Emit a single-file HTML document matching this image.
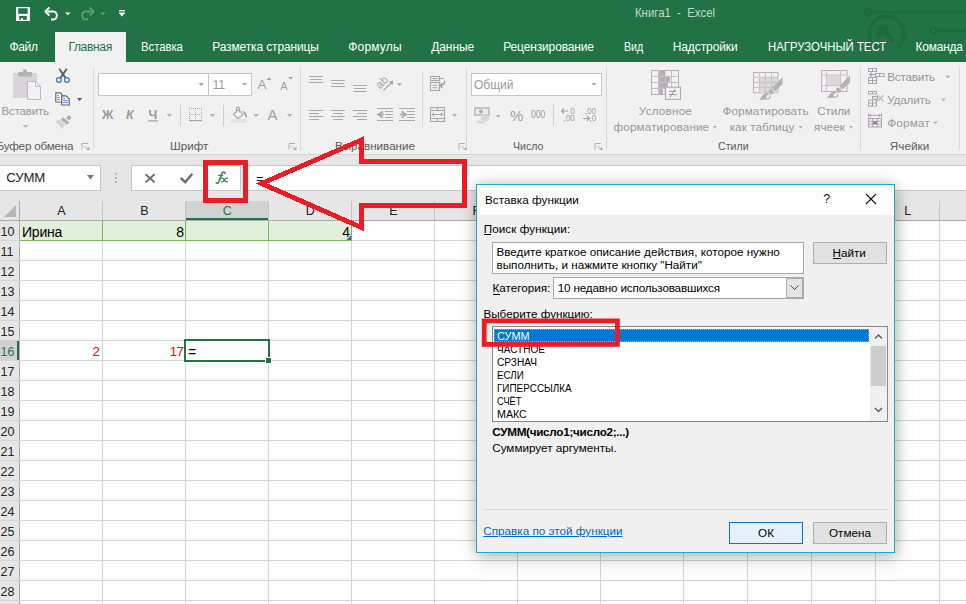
<!DOCTYPE html><html><head><meta charset="utf-8"><style>
*{margin:0;padding:0;box-sizing:border-box}
html,body{width:966px;height:604px;overflow:hidden;background:#fff;font-family:"Liberation Sans",sans-serif;font-size:12px;color:#000;position:relative}
.a{position:absolute}
.t{position:absolute;white-space:pre;line-height:14px}
.tab{position:absolute;top:40px;color:#fff;font-size:11.8px;white-space:nowrap;line-height:14px}
.gl{position:absolute;color:#505050;font-size:11.7px;white-space:nowrap;line-height:14px}
.dis{color:#a3a3a3}
.cell{position:absolute;font-size:14px;line-height:14px;white-space:nowrap}
.dt{position:absolute;font-size:11.7px;line-height:13px;white-space:pre;color:#000}
svg{position:absolute;overflow:visible}
</style></head><body>
<div class="a" style="left:0;top:0;width:966px;height:62px;background:#217346"></div>
<div class="t" style="left:635.3px;top:5.5px;font-size:12px;color:#c3dccb;transform:scaleX(0.947);transform-origin:0 0;">Книга1  -  Excel</div>
<svg style="left:0;top:0" width="966" height="62">
<g stroke="#1d6a3f" stroke-width="3" fill="none">
<circle cx="868" cy="12" r="3.2"/><line x1="871" y1="12" x2="966" y2="12"/>
<circle cx="933.5" cy="30.5" r="3.2"/><line x1="937" y1="30.5" x2="966" y2="30.5"/>
<path d="M 876 48 A 17.5 17.5 0 1 1 897 48" stroke-width="4"/>
<path d="M 894 42 L 880 28 M 879 37 L 879 28 L 888 28" stroke-width="4.5"/>
</g></svg>
<svg style="left:0;top:0" width="140" height="32">
<rect x="16" y="7" width="14" height="14" fill="#fff"/>
<rect x="18.2" y="8.2" width="9.5" height="5.6" fill="#217346"/>
<rect x="19.2" y="16" width="7.6" height="3.8" fill="#217346"/>
<rect x="21" y="18" width="2" height="2" fill="#fff"/>
<path d="M46 11.5 H54 A4.2 4.2 0 0 1 54 19.5 H51" fill="none" stroke="#fff" stroke-width="1.8"/>
<path d="M45 11.5 L49.5 7.5 M45 11.5 L49.5 15.5" fill="none" stroke="#fff" stroke-width="1.8"/>
<path d="M65 12.5 H70.5 L67.75 15.2 Z" fill="#fff"/>
<g stroke="#5e9c7a" fill="none" stroke-width="1.8">
<path d="M93 11.5 H85 A4.2 4.2 0 0 0 85 19.5 H88"/>
<path d="M94 11.5 L89.5 7.5 M94 11.5 L89.5 15.5"/>
</g>
<path d="M100 12.5 H105.5 L102.75 15.2 Z" fill="#5e9c7a"/>
<rect x="119" y="10" width="6" height="1.3" fill="#fff"/>
<path d="M118.5 12.5 H125.5 L122 16.5 Z" fill="#fff"/>
</svg>
<div class="a" style="left:55px;top:32px;width:71px;height:31px;background:#f1f1f1"></div>
<div class="t" style="left:9.4px;top:39.9px;font-size:12px;color:#fff;letter-spacing:-0.30px;">Файл</div>
<div class="t" style="left:68.4px;top:39.9px;font-size:12px;color:#217346;letter-spacing:-0.32px;">Главная</div>
<div class="t" style="left:141.1px;top:39.9px;font-size:12px;color:#fff;transform:scaleX(0.939);transform-origin:0 0;">Вставка</div>
<div class="t" style="left:212.2px;top:39.9px;font-size:12px;color:#fff;letter-spacing:-0.13px;">Разметка страницы</div>
<div class="t" style="left:348.3px;top:39.9px;font-size:12px;color:#fff;letter-spacing:0.17px;">Формулы</div>
<div class="t" style="left:431.2px;top:39.9px;font-size:12px;color:#fff;letter-spacing:-0.06px;">Данные</div>
<div class="t" style="left:503.2px;top:39.9px;font-size:12px;color:#fff;letter-spacing:-0.14px;">Рецензирование</div>
<div class="t" style="left:623.7px;top:39.9px;font-size:12px;color:#fff;transform:scaleX(0.884);transform-origin:0 0;">Вид</div>
<div class="t" style="left:672.7px;top:39.9px;font-size:12px;color:#fff;letter-spacing:-0.09px;">Надстройки</div>
<div class="t" style="left:767.7px;top:39.9px;font-size:12px;color:#fff;transform:scaleX(0.949);transform-origin:0 0;">НАГРУЗОЧНЫЙ ТЕСТ</div>
<div class="t" style="left:915.6px;top:39.9px;font-size:12px;color:#fff;letter-spacing:-0.24px;">Команда</div>
<div class="a" style="left:0;top:62px;width:966px;height:92px;background:#f1f1f1"></div>
<div class="a" style="left:0;top:154px;width:966px;height:1px;background:#d4d4d4"></div>
<div class="a" style="left:93px;top:67px;width:1px;height:83px;background:#d9d9d9"></div>
<div class="a" style="left:300px;top:67px;width:1px;height:83px;background:#d9d9d9"></div>
<div class="a" style="left:466px;top:67px;width:1px;height:83px;background:#d9d9d9"></div>
<div class="a" style="left:606px;top:67px;width:1px;height:83px;background:#d9d9d9"></div>
<div class="a" style="left:860px;top:67px;width:1px;height:83px;background:#d9d9d9"></div>
<div class="a" style="left:959px;top:67px;width:1px;height:83px;background:#d9d9d9"></div>
<div class="t" style="left:1.6px;top:104.0px;font-size:11.5px;color:#989898;letter-spacing:-0.19px;">Вставить</div>
<div class="t" style="left:-3.5px;top:139.0px;font-size:11.7px;color:#5b5b5b;letter-spacing:-0.21px;">Буфер обмена</div>
<div class="t" style="left:170.0px;top:139.4px;font-size:11.7px;color:#5b5b5b;">Шрифт</div>
<div class="t" style="left:335.0px;top:139.0px;font-size:11.7px;color:#5b5b5b;letter-spacing:-0.04px;">Выравнивание</div>
<div class="t" style="left:512.7px;top:138.8px;font-size:11.7px;color:#5b5b5b;transform:scaleX(0.903);transform-origin:0 0;">Число</div>
<div class="t" style="left:718.0px;top:138.8px;font-size:11.7px;color:#5b5b5b;transform:scaleX(0.908);transform-origin:0 0;">Стили</div>
<div class="t" style="left:889.8px;top:138.8px;font-size:11.7px;color:#5b5b5b;letter-spacing:0.06px;">Ячейки</div>
<div class="t" style="left:638.8px;top:104.0px;font-size:11.7px;color:#989898;letter-spacing:0.21px;">Условное</div>
<div class="t" style="left:613.6px;top:120.0px;font-size:11.7px;color:#989898;letter-spacing:0.13px;">форматирование</div>
<div class="t" style="left:722.5px;top:104.0px;font-size:11.7px;color:#989898;letter-spacing:0.10px;">Форматировать</div>
<div class="t" style="left:729.7px;top:120.0px;font-size:11.7px;color:#989898;letter-spacing:0.06px;">как таблицу</div>
<div class="t" style="left:817.2px;top:104.0px;font-size:11.7px;color:#989898;letter-spacing:-0.12px;">Стили</div>
<div class="t" style="left:814.0px;top:120.0px;font-size:11.7px;color:#989898;letter-spacing:0.07px;">ячеек</div>
<div class="t" style="left:887.2px;top:70.2px;font-size:11.7px;color:#989898;letter-spacing:-0.22px;">Вставить</div>
<div class="t" style="left:887.2px;top:93.0px;font-size:11.7px;color:#989898;letter-spacing:-0.17px;">Удалить</div>
<div class="t" style="left:887.2px;top:116.0px;font-size:11.7px;color:#989898;letter-spacing:0.21px;">Формат</div>
<div class="a" style="left:98px;top:73px;width:111px;height:23px;background:#fff;border:1px solid #c6c6c6"></div>
<div class="a" style="left:208px;top:73px;width:44px;height:23px;background:#fff;border:1px solid #c6c6c6"></div>
<div class="t" style="left:212.4px;top:77.5px;font-size:12.3px;color:#9a9a9a;">11</div>
<div class="a" style="left:471px;top:73px;width:131px;height:23px;background:#fff;border:1px solid #c6c6c6"></div>
<div class="t" style="left:474.0px;top:77.5px;font-size:12px;color:#9a9a9a;">Общий</div>
<div class="t" style="left:257.5px;top:78.0px;font-size:13.5px;color:#a0a0a0;">A</div>
<div class="t" style="left:280.5px;top:79.0px;font-size:10.5px;color:#a0a0a0;">A</div>
<div class="t" style="left:102.0px;top:107.5px;font-size:12.5px;color:#9a9a9a;letter-spacing:1.70px;font-weight:bold;">Ж</div>
<div class="t" style="left:126.0px;top:107.5px;font-size:12.5px;color:#9a9a9a;font-weight:bold;font-style:italic;">К</div>
<div class="t" style="left:148.5px;top:107.5px;font-size:12.5px;color:#9a9a9a;font-weight:bold;">Ч</div>
<div class="t" style="left:267.5px;top:107.5px;font-size:15px;color:#a0a0a0;">A</div>
<div class="t" style="left:510.0px;top:109.0px;font-size:15px;color:#a0a0a0;">%</div>
<div class="t" style="left:530.6px;top:108.3px;font-size:10px;color:#9a9a9a;transform:scaleX(0.863);transform-origin:0 0;">000</div>
<svg style="left:0;top:62px" width="966" height="92">
<g transform="translate(0,-62)">
<!-- paste clipboard -->
<rect x="13" y="73" width="24" height="25" rx="1" fill="#d8d5d8"/>
<rect x="18" y="72" width="14" height="4.5" fill="#b4b4b4"/>
<rect x="23" y="69.5" width="4" height="3" rx="1" fill="#b4b4b4"/>
<path d="M27.5 81.5 H35.5 L40.5 86.5 V99.5 H27.5 Z" fill="#f4f1f6" stroke="#bdbdbd" stroke-width="1"/>
<path d="M35.5 81.5 V86.5 H40.5" fill="none" stroke="#bdbdbd" stroke-width="1"/>
<path d="M22.5 125 H28.5 L25.5 128 Z" fill="#bcbcbc"/>
<!-- scissors -->
<path d="M59.2 68.8 L65.6 78 M66.8 68.8 L60.4 78" stroke="#5c5c5c" stroke-width="1.9" fill="none"/>
<circle cx="58.9" cy="80" r="2.4" fill="none" stroke="#3a78c0" stroke-width="1.2"/>
<circle cx="66.9" cy="80" r="2.4" fill="none" stroke="#3a78c0" stroke-width="1.2"/>
<!-- copy -->
<path d="M55.8 92.8 H60.5 L62 94.3 V102 H55.8 Z" fill="#fff" stroke="#666" stroke-width="1.2"/>
<path d="M61.8 95.8 H66 L69.2 99 V105 H61.8 Z" fill="#fff" stroke="#666" stroke-width="1.2"/>
<path d="M57.2 95.4 H58.8 M57.2 97.4 H59.8 M57.2 99.4 H59.8 M63.2 98.4 H65 M63.2 100.4 H67.8 M63.2 102.4 H67.8" stroke="#3a72b8" stroke-width="0.9"/>
<path d="M77 98 H82.2 L79.6 101 Z" fill="#555"/>
<!-- format painter -->
<path d="M55.5 121.3 L60.3 119.3 L65.8 124.6 L62 128.8 Z" fill="#d8d4d8"/>
<path d="M61 119.6 L63 117.3 L69.3 122.4 L67.2 124.7 Z" fill="#b0aeb0"/>
<path d="M66 118 L68.8 115 L71.6 117.8 L68.8 120.8 Z" fill="#b0aeb0"/>
<!-- launcher icons -->
<g fill="none" stroke="#b0b0b0" stroke-width="1">
<path d="M82 149.5 V143.5 H88"/><path d="M84.5 146 L88.5 150"/>
<path d="M289 149.5 V143.5 H295"/><path d="M291.5 146 L295.5 150"/>
<path d="M459 149.5 V143.5 H465"/><path d="M461.5 146 L465.5 150"/>
<path d="M595 149.5 V143.5 H601"/><path d="M597.5 146 L601.5 150"/>
</g>
<path d="M86 150 H89.5 V146.5 Z" fill="#b0b0b0"/>
<path d="M293 150 H296.5 V146.5 Z" fill="#b0b0b0"/>
<path d="M463 150 H466.5 V146.5 Z" fill="#b0b0b0"/>
<path d="M599 150 H602.5 V146.5 Z" fill="#b0b0b0"/>
<!-- combo arrows -->
<path d="M198.5 83 H204 L201.25 86 Z" fill="#a6a6a6"/>
<path d="M242 83 H247 L244.5 85.7 Z" fill="#a6a6a6"/>
<path d="M591.5 83 H596.5 L594 85.7 Z" fill="#a6a6a6"/>
<!-- A^ A˅ triangles -->
<path d="M266.3 80 H271.5 L268.9 77.3 Z" fill="#a6a6a6"/>
<path d="M288 77 H293.2 L290.6 79.6 Z" fill="#a6a6a6"/>
<!-- underline & dropdowns row2 -->
<rect x="148" y="120.3" width="10" height="1.2" fill="#a0a0a0"/>
<g fill="#b4b4b4">
<path d="M166.7 114 H172.2 L169.45 117 Z"/>
<path d="M209.8 114 H215.4 L212.6 117 Z"/>
<path d="M253.3 114 H258.9 L256.1 117 Z"/>
<path d="M287 114 H292.5 L289.75 117 Z"/>
<path d="M397 83 H401.8 L399.4 86 Z"/>
<path d="M452 114 H457 L454.5 117 Z"/>
<path d="M495.7 115 H500.5 L498.1 118 Z"/>
<path d="M712.7 126 H717 L714.85 128.5 Z"/>
<path d="M798.3 126 H803 L800.65 128.5 Z"/>
<path d="M848.8 126 H853 L850.9 128.5 Z"/>
<path d="M945.2 75.7 H950.2 L947.7 78.5 Z"/>
<path d="M941 98.5 H946 L943.5 101.3 Z"/>
<path d="M933 121.5 H938 L935.5 124.3 Z"/>
</g>
<!-- sub separators -->
<rect x="180" y="105" width="1" height="21" fill="#d0d0d0"/>
<rect x="223" y="105" width="1" height="21" fill="#d0d0d0"/>
<rect x="422" y="72" width="1" height="55" fill="#d8d8d8"/>
<rect x="553" y="104.5" width="1" height="21" fill="#d0d0d0"/>
<!-- borders icon -->
<rect x="189" y="108" width="13" height="12" fill="#f4eff4"/>
<g fill="#a6a6a6"><rect x="189" y="108" width="1" height="1"/><rect x="191" y="108" width="1" height="1"/><rect x="193" y="108" width="1" height="1"/><rect x="195" y="108" width="1" height="1"/><rect x="197" y="108" width="1" height="1"/><rect x="199" y="108" width="1" height="1"/><rect x="201" y="108" width="1" height="1"/><rect x="189" y="110" width="1" height="1"/><rect x="195" y="110" width="1" height="1"/><rect x="201" y="110" width="1" height="1"/><rect x="189" y="112" width="1" height="1"/><rect x="195" y="112" width="1" height="1"/><rect x="201" y="112" width="1" height="1"/><rect x="189" y="114" width="1" height="1"/><rect x="191" y="114" width="1" height="1"/><rect x="193" y="114" width="1" height="1"/><rect x="195" y="114" width="1" height="1"/><rect x="197" y="114" width="1" height="1"/><rect x="199" y="114" width="1" height="1"/><rect x="201" y="114" width="1" height="1"/><rect x="189" y="116" width="1" height="1"/><rect x="195" y="116" width="1" height="1"/><rect x="201" y="116" width="1" height="1"/><rect x="189" y="118" width="1" height="1"/><rect x="195" y="118" width="1" height="1"/><rect x="201" y="118" width="1" height="1"/><rect x="189" y="120" width="1" height="1"/><rect x="195" y="120" width="1" height="1"/><rect x="201" y="120" width="1" height="1"/></g>
<rect x="189" y="120" width="13" height="1.2" fill="#a6a6a6"/>
<!-- fill bucket -->
<path d="M233.5 114.2 L238.2 109.5 L243 114.2 L238.2 119 Z" fill="#f4eff4" stroke="#a6a6a6" stroke-width="1.1"/>
<path d="M236.5 112.5 V107.3 H239.3 V112.5" fill="none" stroke="#a6a6a6" stroke-width="1"/>
<path d="M242.5 111 Q247.5 111.5 247 118 L245.5 117 L244 113.5 Z" fill="#a6a6a6"/>
<rect x="231" y="119" width="16" height="3.8" fill="#e6e0e6"/>
<!-- alignment lines -->
<g fill="#a9a9a9">
<rect x="309" y="76" width="14" height="1"/><rect x="310" y="79" width="12" height="1"/><rect x="309" y="82" width="14" height="1"/>
<rect x="331" y="80" width="14" height="1"/><rect x="332" y="83" width="12" height="1"/><rect x="331" y="86" width="14" height="1"/>
<rect x="353" y="85" width="14" height="1"/><rect x="354" y="88" width="12" height="1"/><rect x="353" y="91" width="14" height="1"/>
<rect x="309" y="110" width="14" height="1"/><rect x="309" y="113" width="10" height="1"/><rect x="309" y="116" width="14" height="1"/><rect x="309" y="119" width="10" height="1"/>
<rect x="331" y="110" width="14" height="1"/><rect x="333" y="113" width="10" height="1"/><rect x="331" y="116" width="14" height="1"/><rect x="333" y="119" width="10" height="1"/>
<rect x="353" y="110" width="14" height="1"/><rect x="357" y="113" width="10" height="1"/><rect x="353" y="116" width="14" height="1"/><rect x="357" y="119" width="10" height="1"/>
<rect x="377" y="108" width="16" height="1"/><rect x="385" y="111" width="8" height="1"/><rect x="385" y="114" width="8" height="1"/><rect x="385" y="117" width="8" height="1"/><rect x="377" y="120" width="16" height="1"/>
<rect x="399" y="108" width="16" height="1"/><rect x="407" y="111" width="8" height="1"/><rect x="407" y="114" width="8" height="1"/><rect x="407" y="117" width="8" height="1"/><rect x="399" y="120" width="16" height="1"/>
</g>
<path d="M383 111.5 L378 114.5 L383 117.5 M378 114.5 H384" stroke="#a9a9a9" stroke-width="1.6" fill="none"/>
<path d="M400 114.5 H406 M401.5 111.5 L406 114.5 L401.5 117.5" stroke="#a9a9a9" stroke-width="1.6" fill="none"/>
<!-- orientation ab -->
<text x="0" y="0" font-family="Liberation Sans" font-size="11.5" fill="#a6a6a6" transform="translate(380,89.5) rotate(-45)">ab</text>
<path d="M383.5 90.5 L392.5 81.5" stroke="#a6a6a6" stroke-width="1.1" fill="none"/>
<path d="M393.5 80.5 L388.8 81.6 L392.4 85.2 Z" fill="#a6a6a6"/>
<!-- wrap text icon -->
<rect x="431" y="83" width="8" height="7" fill="#f4eff4"/>
<g fill="none" stroke="#a6a6a6" stroke-width="1.1">
<rect x="430.5" y="76.5" width="9" height="4"/><path d="M432.5 78.5 H437.5 M439.5 78.5 H444"/>
<rect x="430.5" y="82.5" width="9" height="8"/><path d="M432.5 85.2 H437.5 M432.5 87.8 H437.5"/>
<path d="M444.5 80.5 Q445.5 85.5 440 85.5" stroke-width="1.3"/><path d="M442.3 83 L439.8 85.5 L442.3 88" stroke-width="1.3"/>
</g>
<!-- merge icon -->
<g fill="none" stroke="#a9a9a9" stroke-width="1.1">
<rect x="430.5" y="107.5" width="14" height="14"/>
<path d="M430.5 110.5 H444.5 M430.5 118.5 H444.5 M437.5 107.5 V110.5 M437.5 118.5 V121.5"/>
<path d="M432.5 114.5 H442.5 M434 113 L432.5 114.5 L434 116 M441 113 L442.5 114.5 L441 116"/>
</g>
<!-- currency -->
<rect x="474" y="107" width="16" height="9" fill="#c6c2c6"/>
<rect x="476" y="109" width="12" height="5" fill="#efeaef"/>
<circle cx="481" cy="111.5" r="2" fill="#b0b0b0"/>
<ellipse cx="485" cy="116" rx="4.5" ry="1.8" fill="#d6d2d6"/>
<ellipse cx="485" cy="119" rx="4.5" ry="1.8" fill="#d6d2d6"/>
<ellipse cx="481" cy="122" rx="4.5" ry="1.6" fill="#dad6da"/>
<!-- decimal icons -->
<g font-family="Liberation Sans" font-size="8.2" fill="#a0a0a0">
<text x="570.3" y="113.6">0</text>
<text x="563.5" y="121.2">,00</text>
<text x="584.7" y="113.6">,00</text>
<text x="589.6" y="121.2">,0</text>
</g>
<path d="M561.5 111 H568 M564 108.5 L561.5 111 L564 113.5" stroke="#a0a0a0" stroke-width="1.1" fill="none"/>
<path d="M583 118.5 H589.5 M587 116 L589.5 118.5 L587 121" stroke="#a0a0a0" stroke-width="1.1" fill="none"/>
<!-- conditional formatting icon -->
<rect x="651.5" y="70.5" width="27" height="24" fill="#f4eff4" stroke="#b4b0b4" stroke-width="1"/>
<path d="M651.5 76.5 H678.5 M651.5 82.5 H678.5 M651.5 88.5 H678.5 M658.5 70.5 V94.5 M665 70.5 V94.5 M671.5 70.5 V94.5" stroke="#c4c0c4" stroke-width="1" fill="none"/>
<g fill="#b4b2b4"><rect x="659" y="71" width="6" height="5"/><rect x="659" y="77" width="11" height="5"/><rect x="659" y="83" width="9" height="5"/><rect x="659" y="89" width="4" height="5"/></g>
<rect x="665.5" y="87.2" width="15" height="12.2" fill="#f4eff4" stroke="#b0acb0" stroke-width="1.1"/>
<path d="M669 91.3 H676.5 M669 94.5 H676.5 M670.2 97.2 L675.3 88.8" stroke="#8e8e8e" stroke-width="0.9" fill="none"/>
<!-- format as table icon -->
<rect x="753.5" y="72.5" width="24.5" height="20.3" fill="#f4eff4" stroke="#b8b4b8" stroke-width="1"/>
<rect x="759.5" y="77.5" width="18" height="15" fill="#dcd8dc"/>
<path d="M753.5 77.3 H778 M753.5 82.3 H778 M753.5 87.4 H778 M759.3 72.5 V92.8 M765.4 72.5 V92.8 M771.5 72.5 V92.8" stroke="#c8c4c8" stroke-width="1" fill="none"/>
<g transform="translate(0,0)" fill="#b4b4b4">
<path d="M782.5 77.3 L782.5 84.2 L775.3 91.2 L771.8 87.7 Z"/>
<path d="M770.6 88.8 L774.1 92.3 L771.6 94.8 L768.1 91.3 Z"/>
<path d="M767.2 92.2 L770.8 95.8 Q771.5 99.2 767 99.6 L759.6 100 Q762 94.3 767.2 92.2 Z"/>
<ellipse cx="768" cy="96.5" rx="1.4" ry="2.2" transform="rotate(45 768 96.5)" fill="#f4f4f4"/>
</g>
<!-- cell styles icon -->
<rect x="821.5" y="70.5" width="25.5" height="21" fill="#f4eff4" stroke="#b8b4b8" stroke-width="1"/>
<rect x="826.5" y="75.2" width="14" height="10.4" fill="#dcd8dc"/>
<path d="M821.5 75 H847 M821.5 85.6 H847 M826.3 70.5 V91.5 M840.6 70.5 V91.5" stroke="#c8c4c8" stroke-width="1" fill="none"/>
<g transform="translate(67.5,-1.8)" fill="#b4b4b4">
<path d="M782.5 77.3 L782.5 84.2 L775.3 91.2 L771.8 87.7 Z"/>
<path d="M770.6 88.8 L774.1 92.3 L771.6 94.8 L768.1 91.3 Z"/>
<path d="M767.2 92.2 L770.8 95.8 Q771.5 99.2 767 99.6 L759.6 100 Q762 94.3 767.2 92.2 Z"/>
<ellipse cx="768" cy="96.5" rx="1.4" ry="2.2" transform="rotate(45 768 96.5)" fill="#f4f4f4"/>
</g>
<!-- cells icons -->
<g fill="#f4eff4" stroke="#aaa6aa" stroke-width="1">
<rect x="868.5" y="68.5" width="8" height="3"/><path d="M872.5 68.5 V71.5"/>
<rect x="875.5" y="73.5" width="8.5" height="3"/><path d="M879.5 73.5 V76.5"/>
<rect x="868.5" y="77.5" width="8" height="6"/><path d="M868.5 80.5 H876.5 M872.5 77.5 V83.5"/>
<rect x="868.5" y="91.5" width="8" height="2.5"/><path d="M872.5 91.5 V94"/>
<rect x="872.5" y="96.5" width="5" height="2.5"/>
<rect x="868.5" y="100" width="8" height="6"/><path d="M868.5 103 H876.5 M872.5 100 V106"/>
<rect x="868.5" y="118.5" width="13" height="8.5"/><path d="M868.5 121.3 H881.5 M868.5 124.1 H881.5 M872.8 118.5 V127 M877.2 118.5 V127"/>
</g>
<path d="M869.5 74.6 H875 M871.8 72.6 L869.5 74.6 L871.8 76.6" stroke="#aaa6aa" stroke-width="1.2" fill="none"/>
<path d="M877.2 95 L883.5 101.5 M883.5 95 L877.2 101.5" stroke="#bdbdbd" stroke-width="1.3" fill="none"/>
<path d="M869.5 115.3 H880.5 M871.3 113.8 L869.5 115.3 L871.3 116.8 M878.7 113.8 L880.5 115.3 L878.7 116.8 M868.5 113.3 V117.3 M881.5 113.3 V117.3" stroke="#aaa6aa" stroke-width="1" fill="none"/>
<rect x="873" y="121.5" width="4" height="2.5" fill="#8a868a"/>
</g></svg>
<div class="a" style="left:0;top:155px;width:966px;height:46px;background:#e6e6e6"></div>
<div class="a" style="left:-1px;top:165px;width:102px;height:26px;background:#fff;border:1px solid #c6c6c6"></div>
<div class="t" style="left:6.3px;top:171.2px;font-size:13.2px;color:#222;letter-spacing:-0.19px;">СУММ</div>
<div class="a" style="left:131px;top:165px;width:110px;height:26px;background:#fff;border:1px solid #c6c6c6"></div>
<div class="a" style="left:247px;top:165px;width:730px;height:26px;background:#fff;border:1px solid #c6c6c6"></div>
<div class="t" style="left:256.0px;top:171.5px;font-size:13px;color:#222;">=</div>
<svg style="left:0;top:0" width="966" height="604">
<path d="M87 175 H94 L90.5 179.5 Z" fill="#777"/>
<rect x="115" y="173" width="1.6" height="1.6" fill="#9a9a9a"/>
<rect x="115" y="177.2" width="1.6" height="1.6" fill="#9a9a9a"/>
<rect x="115" y="181.4" width="1.6" height="1.6" fill="#9a9a9a"/>
<path d="M145.5 174.3 L154.6 182.4 M154.6 174.3 L145.5 182.4" stroke="#6a6a6a" stroke-width="1.9" fill="none"/>
<path d="M180.8 178 L185.2 182.2 L192.3 173.8" stroke="#707070" stroke-width="2.5" fill="none"/>
<g fill="none" stroke="#3a8a5a" stroke-linecap="round">
<path d="M225.2 173.2 Q223.6 171.2 222 173.2 L218.8 182 Q217.9 184.2 216.3 182.9" stroke-width="1.7"/>
<path d="M218.6 175.4 H222.6" stroke-width="1.3"/>
<path d="M221.4 178.4 Q223 177.5 224 179.6 Q225 181.8 227.3 181.5 M227.6 178.1 Q225.5 177.9 224.4 179.9 Q223.2 181.9 221.4 181.8" stroke-width="1.3"/>
</g>
</svg>
<div class="a" style="left:0;top:201px;width:966px;height:20px;background:#e6e6e6"></div>
<div class="a" style="left:0;top:221px;width:20px;height:383px;background:#e6e6e6"></div>
<div class="a" style="left:186px;top:201px;width:82px;height:19px;background:#d2d2d2"></div>
<div class="a" style="left:185px;top:218px;width:84px;height:2px;background:#217346"></div>
<div class="a" style="left:0;top:341px;width:19px;height:19px;background:#d2d2d2"></div>
<div class="a" style="left:17px;top:340px;width:2px;height:21px;background:#217346"></div>
<svg style="left:0;top:0" width="30" height="230"><path d="M4 217 H16 V205 Z" fill="#b8b8b8"/></svg>
<div class="a" style="left:0;top:220px;width:966px;height:1px;background:#ababab"></div>
<div class="a" style="left:19px;top:201px;width:1px;height:403px;background:#ababab"></div>
<div class="a" style="left:102px;top:201px;width:1px;height:19px;background:#c6c6c6"></div>
<div class="a" style="left:185px;top:201px;width:1px;height:19px;background:#c6c6c6"></div>
<div class="a" style="left:268px;top:201px;width:1px;height:19px;background:#c6c6c6"></div>
<div class="a" style="left:351px;top:201px;width:1px;height:19px;background:#c6c6c6"></div>
<div class="a" style="left:434px;top:201px;width:1px;height:19px;background:#c6c6c6"></div>
<div class="a" style="left:517px;top:201px;width:1px;height:19px;background:#c6c6c6"></div>
<div class="a" style="left:600px;top:201px;width:1px;height:19px;background:#c6c6c6"></div>
<div class="a" style="left:683px;top:201px;width:1px;height:19px;background:#c6c6c6"></div>
<div class="a" style="left:747px;top:201px;width:1px;height:19px;background:#c6c6c6"></div>
<div class="a" style="left:811px;top:201px;width:1px;height:19px;background:#c6c6c6"></div>
<div class="a" style="left:875px;top:201px;width:1px;height:19px;background:#c6c6c6"></div>
<div class="a" style="left:939px;top:201px;width:1px;height:19px;background:#c6c6c6"></div>
<div class="t" style="left:41.3px;width:40px;text-align:center;top:204px;font-size:12.5px;color:#222">A</div>
<div class="t" style="left:124.3px;width:40px;text-align:center;top:204px;font-size:12.5px;color:#222">B</div>
<div class="t" style="left:207.3px;width:40px;text-align:center;top:204px;font-size:12.5px;color:#217346">C</div>
<div class="t" style="left:290.3px;width:40px;text-align:center;top:204px;font-size:12.5px;color:#222">D</div>
<div class="t" style="left:373.3px;width:40px;text-align:center;top:204px;font-size:12.5px;color:#222">E</div>
<div class="t" style="left:456.3px;width:40px;text-align:center;top:204px;font-size:12.5px;color:#222">F</div>
<div class="t" style="left:539.3px;width:40px;text-align:center;top:204px;font-size:12.5px;color:#222">G</div>
<div class="t" style="left:622.3px;width:40px;text-align:center;top:204px;font-size:12.5px;color:#222">H</div>
<div class="t" style="left:695.8px;width:40px;text-align:center;top:204px;font-size:12.5px;color:#222">I</div>
<div class="t" style="left:759.8px;width:40px;text-align:center;top:204px;font-size:12.5px;color:#222">J</div>
<div class="t" style="left:823.8px;width:40px;text-align:center;top:204px;font-size:12.5px;color:#222">K</div>
<div class="t" style="left:887.8px;width:40px;text-align:center;top:204px;font-size:12.5px;color:#222">L</div>
<div class="a" style="left:102px;top:221px;width:1px;height:383px;background:#d4d4d4"></div>
<div class="a" style="left:185px;top:221px;width:1px;height:383px;background:#d4d4d4"></div>
<div class="a" style="left:268px;top:221px;width:1px;height:383px;background:#d4d4d4"></div>
<div class="a" style="left:351px;top:221px;width:1px;height:383px;background:#d4d4d4"></div>
<div class="a" style="left:434px;top:221px;width:1px;height:383px;background:#d4d4d4"></div>
<div class="a" style="left:517px;top:221px;width:1px;height:383px;background:#d4d4d4"></div>
<div class="a" style="left:600px;top:221px;width:1px;height:383px;background:#d4d4d4"></div>
<div class="a" style="left:683px;top:221px;width:1px;height:383px;background:#d4d4d4"></div>
<div class="a" style="left:747px;top:221px;width:1px;height:383px;background:#d4d4d4"></div>
<div class="a" style="left:811px;top:221px;width:1px;height:383px;background:#d4d4d4"></div>
<div class="a" style="left:875px;top:221px;width:1px;height:383px;background:#d4d4d4"></div>
<div class="a" style="left:939px;top:221px;width:1px;height:383px;background:#d4d4d4"></div>
<div class="a" style="left:0;top:240px;width:966px;height:1px;background:#d4d4d4"></div>
<div class="a" style="left:0;top:260px;width:966px;height:1px;background:#d4d4d4"></div>
<div class="a" style="left:0;top:280px;width:966px;height:1px;background:#d4d4d4"></div>
<div class="a" style="left:0;top:300px;width:966px;height:1px;background:#d4d4d4"></div>
<div class="a" style="left:0;top:320px;width:966px;height:1px;background:#d4d4d4"></div>
<div class="a" style="left:0;top:340px;width:966px;height:1px;background:#d4d4d4"></div>
<div class="a" style="left:0;top:360px;width:966px;height:1px;background:#d4d4d4"></div>
<div class="a" style="left:0;top:380px;width:966px;height:1px;background:#d4d4d4"></div>
<div class="a" style="left:0;top:400px;width:966px;height:1px;background:#d4d4d4"></div>
<div class="a" style="left:0;top:420px;width:966px;height:1px;background:#d4d4d4"></div>
<div class="a" style="left:0;top:440px;width:966px;height:1px;background:#d4d4d4"></div>
<div class="a" style="left:0;top:460px;width:966px;height:1px;background:#d4d4d4"></div>
<div class="a" style="left:0;top:480px;width:966px;height:1px;background:#d4d4d4"></div>
<div class="a" style="left:0;top:500px;width:966px;height:1px;background:#d4d4d4"></div>
<div class="a" style="left:0;top:520px;width:966px;height:1px;background:#d4d4d4"></div>
<div class="a" style="left:0;top:540px;width:966px;height:1px;background:#d4d4d4"></div>
<div class="a" style="left:0;top:560px;width:966px;height:1px;background:#d4d4d4"></div>
<div class="a" style="left:0;top:580px;width:966px;height:1px;background:#d4d4d4"></div>
<div class="a" style="left:0;top:600px;width:966px;height:1px;background:#d4d4d4"></div>
<div class="a" style="left:0;top:620px;width:966px;height:1px;background:#d4d4d4"></div>
<div class="t" style="left:0.6px;top:225px;font-size:12.5px;color:#222">10</div>
<div class="t" style="left:0.6px;top:245px;font-size:12.5px;color:#222">11</div>
<div class="t" style="left:0.6px;top:265px;font-size:12.5px;color:#222">12</div>
<div class="t" style="left:0.6px;top:285px;font-size:12.5px;color:#222">13</div>
<div class="t" style="left:0.6px;top:305px;font-size:12.5px;color:#222">14</div>
<div class="t" style="left:0.6px;top:325px;font-size:12.5px;color:#222">15</div>
<div class="t" style="left:0.6px;top:345px;font-size:12.5px;color:#217346">16</div>
<div class="t" style="left:0.6px;top:365px;font-size:12.5px;color:#222">17</div>
<div class="t" style="left:0.6px;top:385px;font-size:12.5px;color:#222">18</div>
<div class="t" style="left:0.6px;top:405px;font-size:12.5px;color:#222">19</div>
<div class="t" style="left:0.6px;top:425px;font-size:12.5px;color:#222">20</div>
<div class="t" style="left:0.6px;top:445px;font-size:12.5px;color:#222">21</div>
<div class="t" style="left:0.6px;top:465px;font-size:12.5px;color:#222">22</div>
<div class="t" style="left:0.6px;top:485px;font-size:12.5px;color:#222">23</div>
<div class="t" style="left:0.6px;top:505px;font-size:12.5px;color:#222">24</div>
<div class="t" style="left:0.6px;top:525px;font-size:12.5px;color:#222">25</div>
<div class="t" style="left:0.6px;top:545px;font-size:12.5px;color:#222">26</div>
<div class="t" style="left:0.6px;top:565px;font-size:12.5px;color:#222">27</div>
<div class="t" style="left:0.6px;top:585px;font-size:12.5px;color:#222">28</div>
<div class="a" style="left:20px;top:221px;width:332px;height:20px;background:#e2efda"></div>
<div class="a" style="left:20px;top:240px;width:332px;height:1px;background:#7cb858"></div>
<div class="a" style="left:102px;top:221px;width:1px;height:20px;background:#7cb858"></div>
<div class="a" style="left:185px;top:221px;width:1px;height:20px;background:#7cb858"></div>
<div class="a" style="left:268px;top:221px;width:1px;height:20px;background:#7cb858"></div>
<div class="a" style="left:351px;top:221px;width:1px;height:20px;background:#7cb858"></div>
<div class="cell" style="left:22px;top:224.5px;letter-spacing:-0.2px">Ирина</div>
<div class="cell" style="left:101px;width:83px;text-align:right;top:224.5px">8</div>
<div class="cell" style="left:267px;width:83px;text-align:right;top:224.5px">4</div>
<svg style="left:0;top:0" width="400" height="260"><path d="M351 235.5 V240 H346.5 Z" fill="#3b4fbf"/></svg>
<div class="cell" style="left:17px;width:83px;text-align:right;top:345px;color:#f00;font-size:13.3px">2</div>
<div class="cell" style="left:100.3px;width:83px;text-align:right;top:345px;color:#f00;font-size:13.3px;letter-spacing:-0.6px">17</div>
<div class="cell" style="left:188px;top:344.5px">=</div>
<div class="a" style="left:184px;top:339px;width:86px;height:23px;border:2px solid #217346"></div>
<div class="a" style="left:265px;top:357px;width:7px;height:7px;background:#217346;border:1px solid #fff"></div>
<svg style="left:0;top:0" width="966" height="604">
<g fill="none" stroke="#ed1c24" stroke-width="4.8" stroke-linejoin="miter" stroke-miterlimit="10" shape-rendering="crispEdges">
<rect x="205.3" y="162.3" width="40.4" height="38.2"/>
<path d="M261.5 183.5 L361.5 140 L361.5 161.4 L464.6 161.4 L464.6 205.6 L361.5 205.6 L361.5 227.5 Z"/>
</g></svg>
<div class="a" style="left:476px;top:184px;width:419px;height:369px;background:#f0f0f0;border:1px solid #1eaac6;box-shadow:0 0 13px rgba(0,0,0,.22),2px 7px 18px rgba(0,0,0,.16)"></div>
<div class="a" style="left:477px;top:185px;width:417px;height:30px;background:#fff"></div>
<div class="t" style="left:485.0px;top:192.8px;font-size:11.7px;color:#000;letter-spacing:0.04px;">Вставка функции</div>
<svg style="left:0;top:0" width="966" height="604"><path d="M866 194 L876 204 M876 194 L866 204" stroke="#111" stroke-width="1.1" fill="none"/></svg>
<div class="t" style="left:823.3px;top:192.3px;font-size:12.5px;color:#111;">?</div>
<div class="t" style="left:483.7px;top:222.4px;font-size:11.7px;color:#000;letter-spacing:0.07px;">Поиск функции:</div>
<div class="a" style="left:484px;top:234px;width:7px;height:1px;background:#000"></div>
<div class="a" style="left:492px;top:242px;width:312px;height:32px;background:#fff;border:1px solid #a9a9a9"></div>
<div class="t" style="left:496.5px;top:245.1px;font-size:11.7px;color:#000;letter-spacing:-0.00px;">Введите краткое описание действия, которое нужно</div>
<div class="t" style="left:496.5px;top:258.1px;font-size:11.7px;color:#000;">выполнить, и нажмите кнопку "Найти"</div>
<div class="a" style="left:813px;top:242px;width:74px;height:22px;background:#e1e1e1;border:1px solid #adadad"></div>
<div class="t" style="left:832.5px;top:246.0px;font-size:11.7px;color:#000;">Найти</div>
<div class="a" style="left:833px;top:258px;width:8px;height:1px;background:#000"></div>
<div class="t" style="left:492.4px;top:281.1px;font-size:11.7px;color:#000;">Категория:</div>
<div class="a" style="left:493px;top:293.5px;width:7px;height:1px;background:#000"></div>
<div class="a" style="left:553px;top:277px;width:251px;height:22px;background:#fff;border:1px solid #a9a9a9"></div>
<div class="a" style="left:786px;top:278px;width:17px;height:20px;background:#e5e5e5;border:1px solid #adadad"></div>
<svg style="left:0;top:0" width="966" height="604"><path d="M790.5 285.5 L794.5 289.5 L798.5 285.5" stroke="#444" stroke-width="1" fill="none"/></svg>
<div class="t" style="left:557.7px;top:281.1px;font-size:11.7px;color:#000;letter-spacing:-0.17px;">10 недавно использовавшихся</div>
<div class="t" style="left:483.4px;top:306.7px;font-size:11.7px;color:#000;">Выберите функцию:</div>
<div class="a" style="left:492px;top:326px;width:396px;height:96px;background:#fff;border:1px solid #828790"></div>
<div class="a" style="left:494px;top:329px;width:375px;height:13px;background:#0078d7;outline:1px dotted #f0a040;outline-offset:-1px"></div>
<div class="t" style="left:496.5px;top:328.5px;font-size:11.7px;color:#fff;transform:scaleX(0.929);transform-origin:0 0;">СУММ</div>
<div class="t" style="left:496.5px;top:341.5px;font-size:11.7px;color:#000;transform:scaleX(0.859);transform-origin:0 0;">ЧАСТНОЕ</div>
<div class="t" style="left:496.5px;top:354.5px;font-size:11.7px;color:#000;transform:scaleX(0.866);transform-origin:0 0;">СРЗНАЧ</div>
<div class="t" style="left:496.5px;top:367.5px;font-size:11.7px;color:#000;transform:scaleX(0.836);transform-origin:0 0;">ЕСЛИ</div>
<div class="t" style="left:496.5px;top:380.5px;font-size:11.7px;color:#000;transform:scaleX(0.848);transform-origin:0 0;">ГИПЕРССЫЛКА</div>
<div class="t" style="left:496.5px;top:393.5px;font-size:11.7px;color:#000;transform:scaleX(0.795);transform-origin:0 0;">СЧЁТ</div>
<div class="t" style="left:496.5px;top:406.5px;font-size:11.7px;color:#000;transform:scaleX(0.912);transform-origin:0 0;">МАКС</div>
<div class="a" style="left:870px;top:327px;width:17px;height:94px;background:#f0f0f0"></div>
<div class="a" style="left:871px;top:346px;width:15px;height:40px;background:#cdcdcd"></div>
<svg style="left:0;top:0" width="966" height="604"><path d="M875 338.5 L878.5 335 L882 338.5" stroke="#606060" stroke-width="1.5" fill="none"/><path d="M875 408 L878.5 411.5 L882 408" stroke="#606060" stroke-width="1.5" fill="none"/></svg>
<div class="t" style="left:492.2px;top:425.0px;font-size:11.7px;color:#000;letter-spacing:-0.28px;font-weight:bold;">СУММ(число1;число2;...)</div>
<div class="t" style="left:492.2px;top:441.3px;font-size:11.7px;color:#000;">Суммирует аргументы.</div>
<div class="a" style="left:483px;top:509px;width:405px;height:1px;background:#dadada"></div>
<div class="t" style="left:483.3px;top:524.3px;font-size:11.7px;color:#0066cc;letter-spacing:0.01px;text-decoration:underline;">Справка по этой функции</div>
<div class="a" style="left:729px;top:522px;width:74px;height:22px;background:#e5f1fb;border:1px solid #0078d7"></div>
<div class="t" style="left:729.0px;top:525.8px;font-size:11.7px;color:#000;width:74px;text-align:center;">ОК</div>
<div class="a" style="left:813px;top:522px;width:74px;height:22px;background:#e1e1e1;border:1px solid #adadad"></div>
<div class="t" style="left:813.0px;top:525.8px;font-size:11.7px;color:#000;width:74px;text-align:center;">Отмена</div>
<svg style="left:0;top:0" width="966" height="604"><rect x="484.2" y="320.9" width="133.2" height="23.5" fill="none" stroke="#ed1c24" stroke-width="4.8"/></svg>
</body></html>
